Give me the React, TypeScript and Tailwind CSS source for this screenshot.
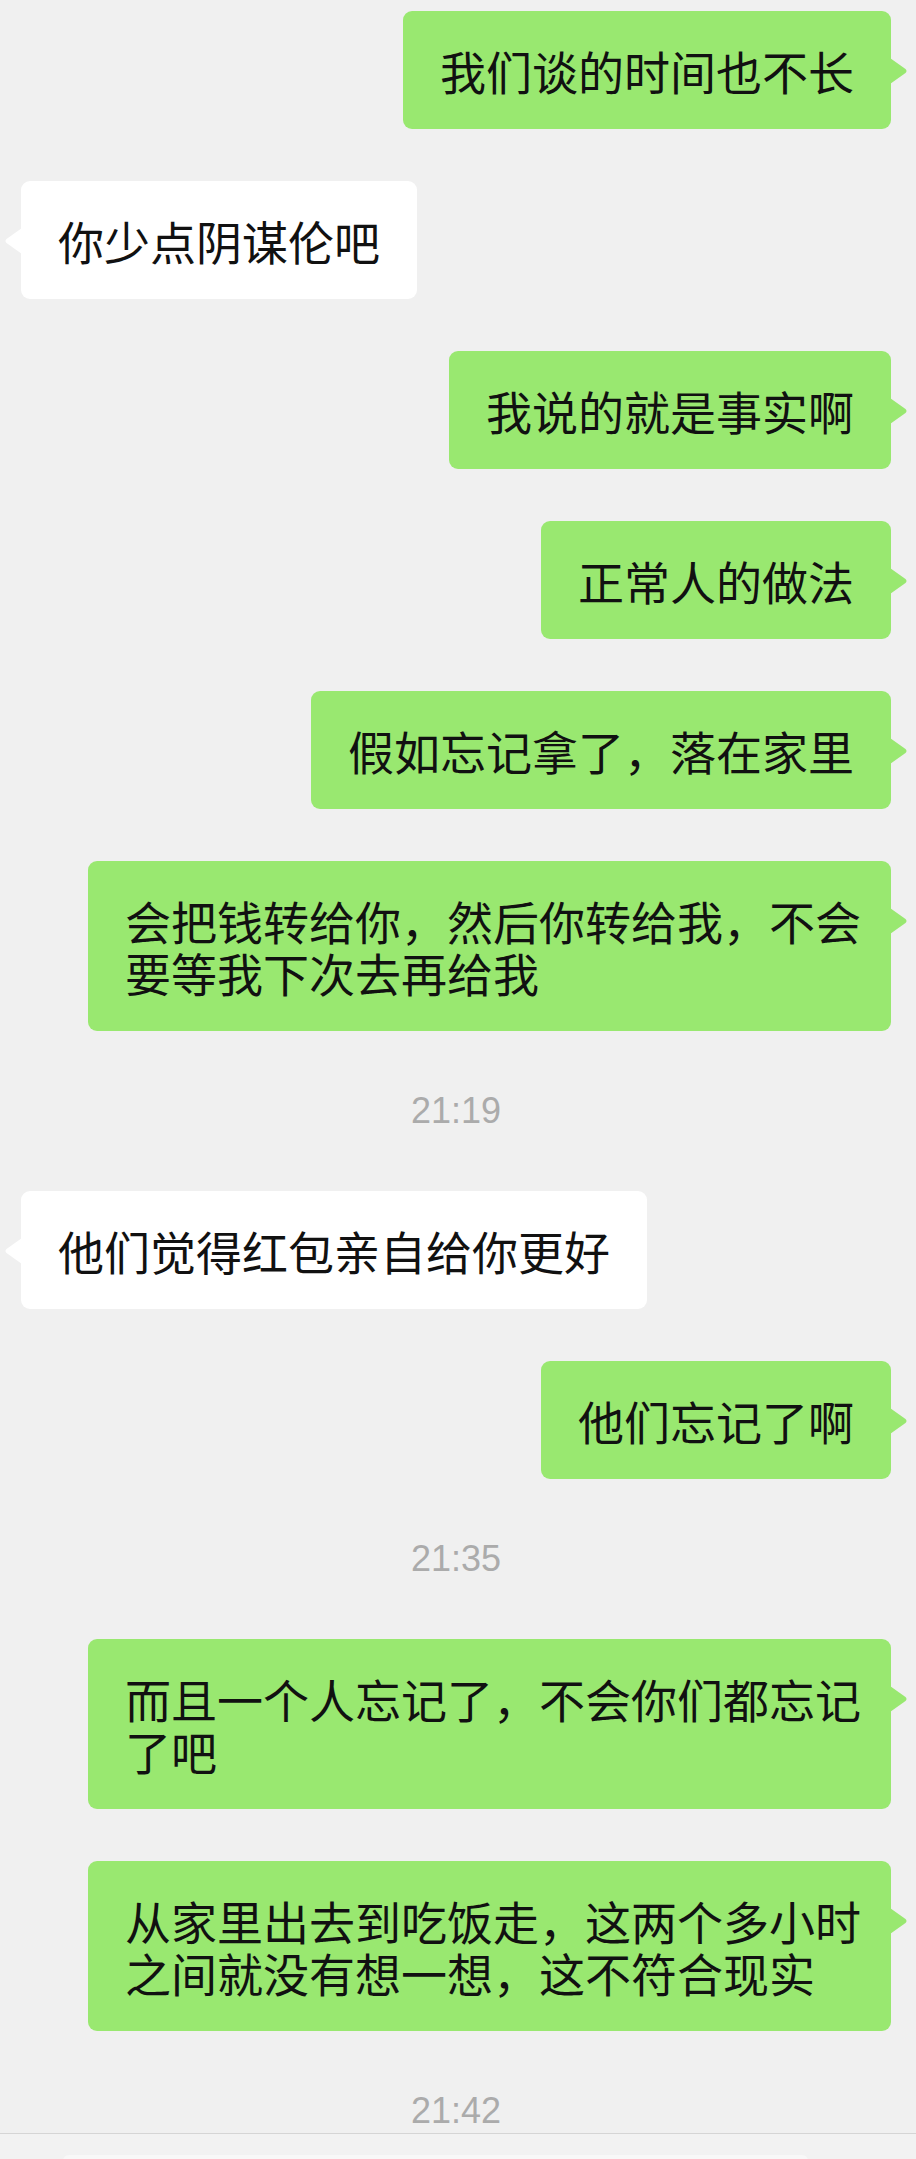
import React from "react";

type Msg =
  | { kind: "msg"; side: "l" | "r"; lines: string[] }
  | { kind: "time"; t: string };

const messages: Msg[] = [
  { kind: "msg", side: "r", lines: ["我们谈的时间也不长"] },
  { kind: "msg", side: "l", lines: ["你少点阴谋伦吧"] },
  { kind: "msg", side: "r", lines: ["我说的就是事实啊"] },
  { kind: "msg", side: "r", lines: ["正常人的做法"] },
  { kind: "msg", side: "r", lines: ["假如忘记拿了，落在家里"] },
  { kind: "msg", side: "r", lines: ["会把钱转给你，然后你转给我，不会", "要等我下次去再给我"] },
  { kind: "time", t: "21:19" },
  { kind: "msg", side: "l", lines: ["他们觉得红包亲自给你更好"] },
  { kind: "msg", side: "r", lines: ["他们忘记了啊"] },
  { kind: "time", t: "21:35" },
  { kind: "msg", side: "r", lines: ["而且一个人忘记了，不会你们都忘记", "了吧"] },
  { kind: "msg", side: "r", lines: ["从家里出去到吃饭走，这两个多小时", "之间就没有想一想，这不符合现实"] },
  { kind: "time", t: "21:42" },
];

function Bubble({ side, lines }: { side: "l" | "r"; lines: string[] }) {
  const sent = side === "r";
  const multi = lines.length > 1;
  return (
    <div className={sent ? "flex justify-end" : "flex justify-start"}>
      <div
        className={
          "relative rounded-[9px] py-[33px] text-[46px] leading-[52px] text-[#111111] whitespace-nowrap " +
          (sent ? "bg-[#99e870] " : "bg-white ") +
          (multi ? "pl-[37px] pr-[30px]" : "px-[37px]")
        }
      >
        {lines.map((l, i) => (
          <div key={i}>{l}</div>
        ))}
        {sent ? (
          <svg
            className="absolute right-[-17px] top-[47px]"
            width="18"
            height="26"
            viewBox="0 0 18 26"
          >
            <path d="M0 0 L15.5 11 Q17.5 13 15.5 15 L0 26 Z" fill="#99e870" />
          </svg>
        ) : (
          <svg
            className="absolute left-[-17px] top-[47px]"
            width="18"
            height="26"
            viewBox="0 0 18 26"
          >
            <path d="M18 0 L2.5 11 Q0.5 13 2.5 15 L18 26 Z" fill="#ffffff" />
          </svg>
        )}
      </div>
    </div>
  );
}

export default function App() {
  return (
    <div
      className="w-[916px] h-[2159px] overflow-hidden bg-[#f0f0f0] flex flex-col"
      style={{ fontFamily: '"Noto Sans CJK SC", "Noto Sans", sans-serif' }}
    >
      <div className="h-[2133px] shrink-0 overflow-hidden flex flex-col gap-[52px] pt-[11px] pl-[21px] pr-[25px]">
        {messages.map((m, i) =>
          m.kind === "time" ? (
            <div
              key={i}
              className="h-[56px] shrink-0 flex items-center justify-center text-[36px] text-[#ababab] leading-none"
              style={{ fontFamily: '"Liberation Sans", Arial, sans-serif' }}
            >
              {m.t}
            </div>
          ) : (
            <div key={i} className="shrink-0">
              <Bubble side={m.side} lines={m.lines} />
            </div>
          )
        )}
      </div>
      <div className="h-px bg-[#d5d5d5] shrink-0" />
      <div className="flex-1 bg-[#f2f2f2] pt-[21px] pl-[63px] pr-[108px]">
        <div className="h-[40px] bg-[#f8f8f8] rounded-[6px]" />
      </div>
    </div>
  );
}
